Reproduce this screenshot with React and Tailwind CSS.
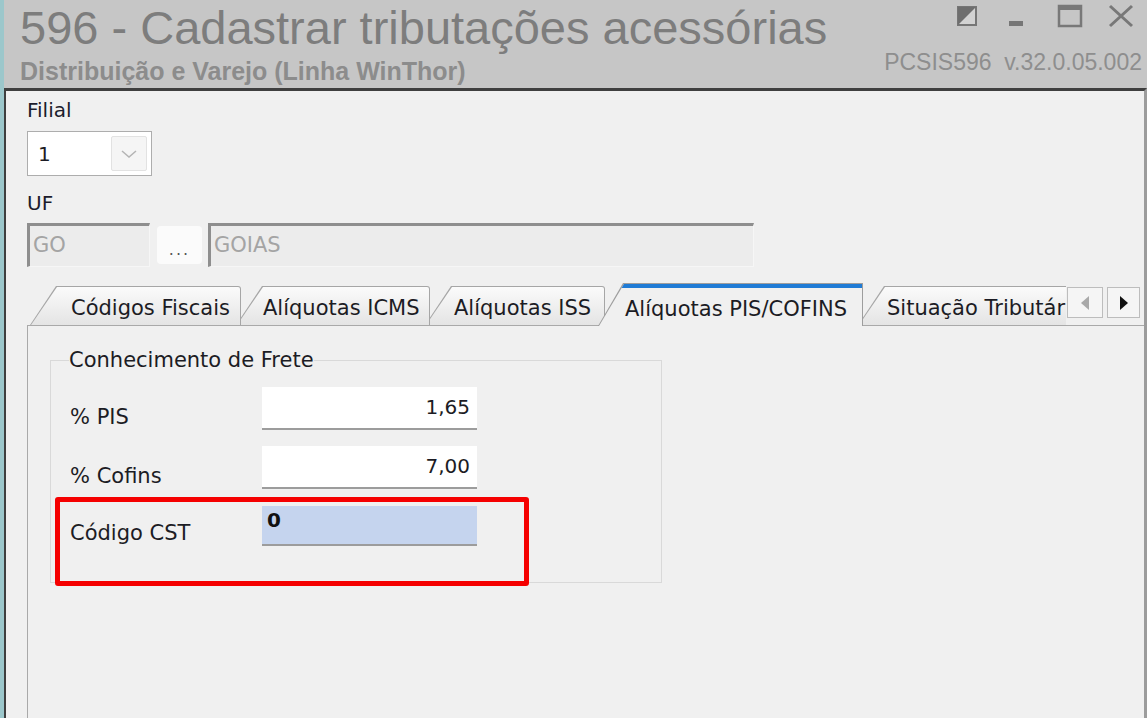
import React from 'react';

const ui = "font-['DejaVu_Sans',sans-serif]";

const tabs = [
    { label: 'Códigos Fiscais', w: 'w-[211px]', ml: 'ml-[3px]', pl: 'pl-[40px]', z: 'z-[4]' },
    { label: 'Alíquotas ICMS', w: 'w-[194px]', ml: '-ml-[5px]', pl: 'pl-[26px]', z: 'z-[3]' },
    { label: 'Alíquotas ISS', w: 'w-[180px]', ml: '-ml-[5px]', pl: 'pl-[28px]', z: 'z-[2]' },
    { label: 'Alíquotas PIS/COFINS', w: 'w-[265px]', ml: '-ml-[7px]', pl: 'pl-[26px]', z: 'z-[10]', active: true },
    { label: 'Situação Tributár', w: 'w-[220px]', ml: '-ml-[5px]', pl: 'pl-[28px]', z: 'z-[1]' },
];

function Tab({ label, w, ml, pl, z, active }) {
    if (active) {
        return (
            <div className={`relative ${z} ${w} ${ml} h-[43px] shrink-0 bg-[#9d9d9d] pt-[1px] pl-[1px] pr-[1px] [clip-path:polygon(0_100%,25px_0,100%_0,100%_100%)]`}>
                <div className={`h-full bg-[#f0f0f0] border-t-[4px] border-[#1f7bd5] ${pl} pt-[9px] text-[21px] leading-[24px] text-[#1c1c24] whitespace-nowrap [clip-path:polygon(0_100%,25px_0,100%_0,100%_100%)]`}>
                    {label}
                </div>
            </div>
        );
    }
    return (
        <div className={`relative ${z} ${w} ${ml} mb-[1px] h-[39px] shrink-0 bg-[#a6a6a6] pt-[1px] pl-[1px] pr-[1px] rounded-tr-[3px] [clip-path:polygon(0_100%,26px_0,100%_0,100%_100%)]`}>
            <div className={`h-full bg-linear-to-b from-[#fbfbfb] to-[#e4e4e4] rounded-tr-[2px] ${pl} pt-[9px] text-[21px] leading-[24px] text-[#1c1c24] whitespace-nowrap overflow-hidden [clip-path:polygon(0_100%,26px_0,100%_0,100%_100%)]`}>
                {label}
            </div>
        </div>
    );
}

function Field({ label, value, highlight }) {
    return (
        <div className="flex items-end">
            <div className="w-[192px] pb-[1px] text-[21px] leading-[24px] text-[#1c1c24]">{label}</div>
            {highlight ? (
                <div className="w-[215px] h-[40px] bg-[#c5d4ee] border-b-2 border-[#9c9c9c] pl-[5px] pt-[2px] text-[20px] leading-[24px] font-bold text-[#111]">
                    {value}
                </div>
            ) : (
                <div className="w-[215px] h-[43px] bg-white border-b-2 border-[#9c9c9c] pr-[7px] pt-[8px] text-right text-[20px] leading-[24px] text-[#1c1c24]">
                    {value}
                </div>
            )}
        </div>
    );
}

export default function App() {
    return (
        <div className={`relative w-[1147px] h-[718px] overflow-hidden flex bg-[#9cc7cb] ${ui}`}>
            <div className="ml-[4px] flex-1 flex flex-col">
                {/* Title bar */}
                <div className="h-[88px] bg-[#c6c6c6] flex justify-between font-['Liberation_Sans',Arial,sans-serif]">
                    <div className="pl-[16px]">
                        <div className="mt-[4px] text-[47px] leading-none text-[#7d7d7d] whitespace-nowrap">
                            596 - Cadastrar tributações acessórias
                        </div>
                        <div className="mt-[8px] text-[25px] leading-[25px] font-bold text-[#8c8c8c] whitespace-nowrap">
                            Distribuição e Varejo (Linha WinThor)
                        </div>
                    </div>
                    <div className="flex flex-col items-end pr-[5px]">
                        <div className="flex items-start mt-[4px] mr-[7px]">
                            <svg width="20" height="20" viewBox="0 0 20 20" className="mt-[2px]">
                                <rect x="1" y="1" width="18" height="18" fill="#d2d2d2" stroke="#767676" strokeWidth="2" />
                                <polygon points="1,1 19,1 1,19" fill="#6e6e6e" />
                            </svg>
                            <svg width="16" height="24" viewBox="0 0 16 24" className="ml-[31px]">
                                <rect x="1" y="17" width="14" height="5" fill="#767676" />
                            </svg>
                            <svg width="26" height="24" viewBox="0 0 26 24" className="ml-[33px]">
                                <rect x="2" y="2" width="22" height="20" fill="none" stroke="#787878" strokeWidth="2.5" />
                                <rect x="2" y="1" width="22" height="5" fill="#787878" />
                            </svg>
                            <svg width="28" height="24" viewBox="0 0 28 24" className="ml-[24px]">
                                <path d="M3 2 L25 22 M25 2 L3 22" stroke="#787878" strokeWidth="3" />
                            </svg>
                        </div>
                        <div className="mt-[22px] text-[23px] leading-[24px] text-[#8e8e8e] whitespace-pre">
                            PCSIS596  v.32.0.05.002
                        </div>
                    </div>
                </div>

                {/* Form body */}
                <div className="flex-1 flex flex-col bg-[#f0f0f0] border-t-[3px] border-l-[2px] border-[#3f3f3f] border-r-[3px] border-r-[#9c9c9c] pl-[21px]">
                    <div className="mt-[8px] text-[20px] leading-[22px] text-[#1c1c2c]">Filial</div>
                    <div className="mt-[10px] w-[125px] h-[45px] border border-[#adadad] bg-white flex items-center justify-between pl-[10px] pr-[4px]">
                        <span className="text-[20px] text-[#1c1c24]">1</span>
                        <div className="w-[36px] h-[35px] bg-[#f5f5f5] border border-[#e2e2e2] rounded-[2px] flex items-center justify-center">
                            <svg width="18" height="10" viewBox="0 0 18 10">
                                <path d="M2 2 L9 8 L16 2" fill="none" stroke="#b4b4b4" strokeWidth="1.5" />
                            </svg>
                        </div>
                    </div>

                    <div className="mt-[16px] text-[20px] leading-[22px] text-[#1c1c2c]">UF</div>
                    <div className="mt-[9px] flex items-center">
                        <div className="w-[123px] h-[44px] bg-[#ececec] border-t-[3px] border-l-[3px] border-[#8e8e8e] border-r border-b border-r-[#f6f6f6] border-b-[#f6f6f6] pl-[3px] pt-[7px] text-[21px] leading-[24px] text-[#a4a4a4]">
                            GO
                        </div>
                        <div className="ml-[7px] w-[45px] h-[38px] bg-[#fbfbfb] rounded-[4px] flex items-end justify-center pb-[6px] text-[16px] leading-[16px] text-[#555] tracking-[2px]">
                            ...
                        </div>
                        <div className="ml-[6px] w-[546px] h-[44px] bg-[#ececec] border-t-[3px] border-l-[3px] border-[#8e8e8e] border-r border-b border-r-[#f6f6f6] border-b-[#f6f6f6] pl-[3px] pt-[7px] text-[21px] leading-[24px] text-[#a4a4a4]">
                            GOIAS
                        </div>
                    </div>

                    {/* Tabs */}
                    <div className="mt-[16px] flex items-start">
                        <div className="w-[1039px] h-[43px] overflow-hidden flex items-end">
                            {tabs.map((t) => (
                                <Tab key={t.label} {...t} />
                            ))}
                        </div>
                        <div className="mt-[4px] ml-[1px] w-[36px] h-[31px] border border-[#bdbdbd] bg-[#f5f5f5] flex items-center justify-center">
                            <svg width="10" height="16" viewBox="0 0 10 16">
                                <polygon points="9,1 9,15 1,8" fill="#a9a9a9" />
                            </svg>
                        </div>
                        <div className="mt-[4px] ml-[4px] w-[33px] h-[31px] border border-[#bdbdbd] bg-[#f5f5f5] flex items-center justify-center">
                            <svg width="10" height="16" viewBox="0 0 10 16">
                                <polygon points="1,1 1,15 9,8" fill="#111" />
                            </svg>
                        </div>
                    </div>

                    {/* Tab panel */}
                    <div className="-mt-[1px] flex-1 border-t border-l border-[#a9a9a9]">
                        <fieldset className="ml-[22px] mt-[23px] w-[612px] h-[234px] border border-[#d9d9d9] pl-[19px]">
                            <legend className="ml-[-1px] text-[21px] leading-[22px] text-[#1c1c24]">Conhecimento de Frete</legend>
                            <div className="mt-[16px] flex flex-col gap-[16px]">
                                <Field label="% PIS" value="1,65" />
                                <Field label="% Cofins" value="7,00" />
                                <div className="mt-[1px]">
                                    <Field label="Código CST" value="0" highlight />
                                </div>
                            </div>
                        </fieldset>
                    </div>
                </div>
            </div>

            {/* Highlight annotation */}
            <div className="absolute left-[55px] top-[497px] w-[474px] h-[89px] border-[5px] border-[#f50000] rounded-[3px]" />
        </div>
    );
}
